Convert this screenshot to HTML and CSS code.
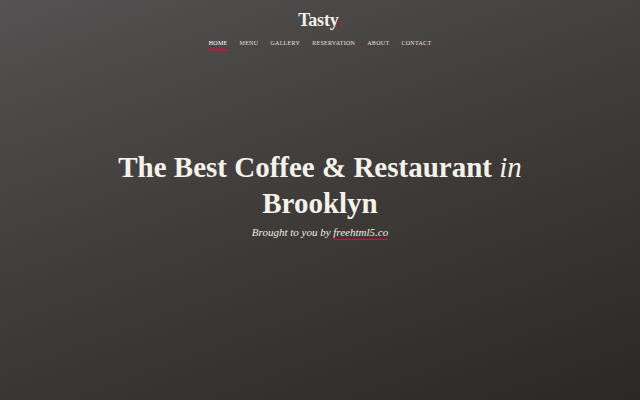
FILE: index.html
```html
<!DOCTYPE html>
<html>
<head>
<meta charset="utf-8">
<link rel="stylesheet" href="styles.css">
</head>
<body>
<div class="page">
  <header class="top">
    <div class="logo">Tasty<span class="dot">.</span></div>
    <nav class="nav">
      <a class="active" href="#">Home</a>
      <a href="#">Menu</a>
      <a href="#">Gallery</a>
      <a href="#">Reservation</a>
      <a href="#">About</a>
      <a href="#">Contact</a>
    </nav>
  </header>
  <main class="hero">
    <h1 class="title">The Best Coffee &amp; Restaurant <em>in</em> Brooklyn</h1>
    <p class="sub">Brought to you by <a href="#">freehtml5.co</a></p>
  </main>
</div>
</body>
</html>
```
FILE: styles.css
```css
html, body {
  margin: 0;
  padding: 0;
  height: 100%;
}
body {
  font-family: "Liberation Serif", "DejaVu Serif", serif;
  color: #f3f0ea;
  background: linear-gradient(160deg, #545252 0%, #403d3b 45%, #2b2825 100%);
}
.page {
  height: 400px;
  display: flex;
  flex-direction: column;
  align-items: center;
}
.top {
  display: flex;
  flex-direction: column;
  align-items: center;
  padding-top: 10px;
}
.logo {
  font-size: 18px;
  font-weight: bold;
  line-height: 20px;
  letter-spacing: -0.2px;
}
.dot {
  color: #d0103a;
}
.nav {
  display: flex;
  gap: 12px;
  margin-top: 8px;
}
.nav a {
  color: #e4e0da;
  text-decoration: none;
  text-transform: uppercase;
  font-size: 6px;
  letter-spacing: 0.3px;
  line-height: 10px;
  padding-bottom: 1px;
}
.nav a.active {
  color: #fff;
  border-bottom: 2px solid #d0103a;
}
.hero {
  margin-top: 98px;
  display: flex;
  flex-direction: column;
  align-items: center;
  text-align: center;
}
.title {
  margin: 0;
  width: 440px;
  font-size: 29px;
  line-height: 36px;
  font-weight: bold;
  color: #f5f2ec;
}
.title em {
  font-weight: normal;
}
.sub {
  margin: 3px 0 0;
  font-style: italic;
  font-size: 11px;
  line-height: 16px;
  color: #efebe5;
}
.sub a {
  color: #efebe5;
  text-decoration: none;
  padding-bottom: 1px;
  border-bottom: 1px solid #d0103a;
}
```
